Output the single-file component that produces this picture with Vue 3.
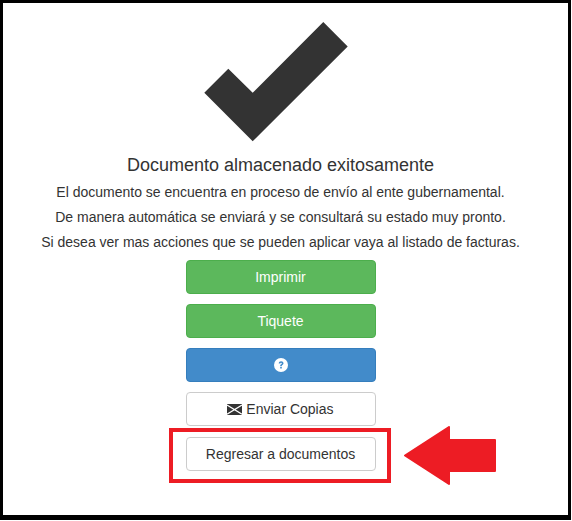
<template>
  <main class="frame">
    <svg class="check" width="144" height="120" viewBox="0 0 144 120" aria-hidden="true">
      <path d="M119.3 0 143.7 24.4 48.7 119.3 0.3 70.7 24.3 46.7 48.7 70.7Z" fill="#333" />
    </svg>

    <h4 class="title">Documento almacenado exitosamente</h4>
    <p v-for="line in lines" :key="line" class="line">{{ line }}</p>

    <div class="actions">
      <button class="btn btn--success" type="button">Imprimir</button>
      <button class="btn btn--success" type="button">Tiquete</button>
      <button class="btn btn--primary" type="button">
        <svg width="14" height="14" viewBox="0 0 14 14" aria-hidden="true">
          <circle cx="7" cy="7" r="7" fill="#fff" />
          <path d="M4.7 5.4C4.8 4 5.8 3.2 7.1 3.2 8.5 3.2 9.5 4 9.5 5.2 9.5 6.1 9 6.6 8.3 7 7.9 7.3 7.8 7.5 7.8 8H6.2C6.2 7.1 6.5 6.7 7.1 6.3 7.6 6 7.8 5.8 7.8 5.4 7.8 5 7.5 4.7 7.1 4.7 6.6 4.7 6.3 5 6.3 5.5ZM6.2 8.8H7.8V10.4H6.2Z" fill="#428bca" />
        </svg>
      </button>
      <button class="btn btn--default" type="button">
        <svg class="mail" width="15" height="11" viewBox="0 0 15 11" aria-hidden="true">
          <rect width="15" height="11" fill="#333" />
          <path d="M0 1 15 10.2M15 1 0 10.2" stroke="#fff" stroke-width="1.3" fill="none" />
        </svg>
        Enviar Copias
      </button>
      <button class="btn btn--default btn--back" type="button">Regresar a documentos</button>
    </div>

    <div class="highlight"></div>
    <svg class="arrow" width="92" height="59" viewBox="0 0 92 59" aria-hidden="true">
      <path d="M1 29.5 45 1V14H91V45H45V58Z" fill="#ed1c24" stroke="#ed1c24" stroke-width="2" stroke-linejoin="round" />
    </svg>
  </main>
</template>

<script setup>
const lines = [
  "El documento se encuentra en proceso de envío al ente gubernamental.",
  "De manera automática se enviará y se consultará su estado muy pronto.",
  "Si desea ver mas acciones que se pueden aplicar vaya al listado de facturas.",
];
</script>

<style scoped>
.frame {
  position: relative;
  box-sizing: border-box;
  width: 571px;
  height: 520px;
  padding: 19px 10px 0 0;
  border: solid #000;
  border-width: 3px 3px 5px 3px;
  display: flex;
  flex-direction: column;
  align-items: center;
  background: #fff;
  color: #333;
  font-family: "Liberation Sans", Arial, sans-serif;
  font-size: 14px;
  line-height: 20px;
}

.check {
  display: block;
  margin-left: -9px;
  flex: none;
}

.title {
  margin: 13px 0 7px;
  font-size: 18px;
  font-weight: 400;
  line-height: 20px;
}

.line {
  margin: 0 0 5px;
}

.actions {
  display: flex;
  flex-direction: column;
  gap: 10px;
  width: 190px;
  margin-top: 3px;
}

.btn {
  box-sizing: border-box;
  height: 34px;
  padding: 0;
  border: 1px solid transparent;
  border-radius: 4px;
  font: inherit;
  cursor: pointer;
}

.btn--success {
  background: #5cb85c;
  border-color: #4cae4c;
  color: #fff;
}

.btn--primary {
  background: #428bca;
  border-color: #357ebd;
  color: #fff;
  display: flex;
  align-items: center;
  justify-content: center;
}

.btn--default {
  background: #fff;
  border-color: #ccc;
  color: #333;
}

.btn--back {
  margin-top: 1px;
}

.mail {
  vertical-align: -1px;
}

.highlight {
  position: absolute;
  left: 166px;
  top: 425px;
  box-sizing: border-box;
  width: 222px;
  height: 55px;
  border: 4px solid #ed1c24;
}

.arrow {
  position: absolute;
  left: 401px;
  top: 423px;
}
</style>
